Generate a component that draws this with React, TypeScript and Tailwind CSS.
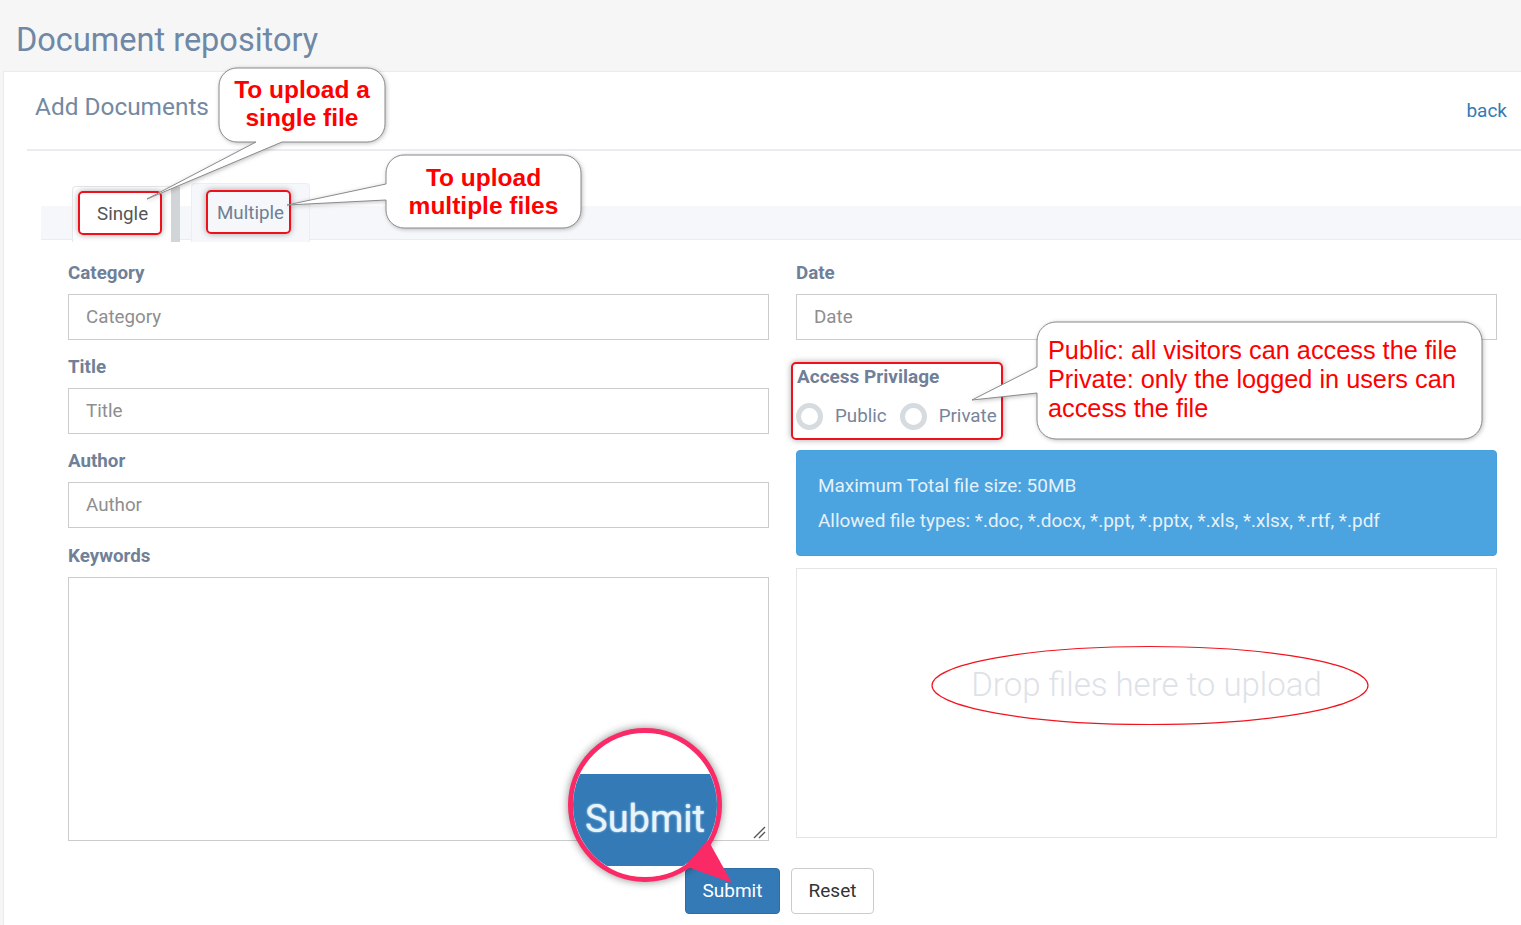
import React from "react";

const roboto = "font-['Roboto',sans-serif]";
const labelCls = "block h-[22px] mb-[10px] text-[18.75px] leading-[22px] font-bold text-[#6f8098]";
const inputCls =
  "block w-full h-[46px] border border-[#cccccc] bg-white px-[17px] text-[18.75px] text-[#555] placeholder:text-[#8e8e8e] outline-none";
const redBox = "absolute rounded-[5px] border-2 border-[#f0101c] shadow-[0_0_6px_rgba(0,0,0,0.35)]";

function Field({ label }: { label: string }) {
  return (
    <div className="mb-4">
      <label className={labelCls}>{label}</label>
      <input className={inputCls} placeholder={label} readOnly />
    </div>
  );
}

function Radio({ label }: { label: string }) {
  return (
    <div className="flex items-center gap-[12px]">
      <span className="block h-[27px] w-[27px] rounded-full border-[5px] border-[#d6dbdf] bg-white" />
      <span className="text-[18.75px] leading-[27px] text-[#76859b]">{label}</span>
    </div>
  );
}

// speech bubble: path is in page coords, svg sits at 0,0 of the page
function Bubbles() {
  return (
    <svg className="absolute left-0 top-0 drop-shadow-[1px_1px_2px_rgba(0,0,0,0.25)]" width="1521" height="925" fill="#fff" stroke="#8a8a8a" strokeWidth="1">
      <path d="M237 68H367a18 18 0 0 1 18 18V124a18 18 0 0 1-18 18H282L147 199L256 142H237a18 18 0 0 1-18-18V86a18 18 0 0 1 18-18Z" />
      <path d="M404 155H563a18 18 0 0 1 18 18V210a18 18 0 0 1-18 18H404a18 18 0 0 1-18-18V200L287 205L386 184V173a18 18 0 0 1 18-18Z" />
      <path d="M1056 322H1463a19 19 0 0 1 19 19V420a19 19 0 0 1-19 19H1056a19 19 0 0 1-19-19V393L972 400L1037 367V341a19 19 0 0 1 19-19Z" />
    </svg>
  );
}

function Magnifier() {
  return (
    <>
      <div className="absolute left-[568px] top-[728px] h-[154px] w-[154px] overflow-hidden rounded-full border-[5px] border-[#f92a66] bg-white shadow-[0_0_8px_rgba(0,0,0,0.45)]">
        <div className="mt-[41px] flex h-[92px] items-center justify-center bg-[#337ab7] pb-[2px] text-[38px] text-[#e8f4fb] [text-shadow:0_0_2px_#e8f4fb]">
          Submit
        </div>
      </div>
      <svg className="absolute left-0 top-0" width="1521" height="925">
        <path d="M708 840L732 883L685 866Z" fill="#f92a66" />
      </svg>
    </>
  );
}

export default function App() {
  return (
    <div className={`relative h-[925px] w-full overflow-hidden bg-[#f6f6f6] ${roboto}`}>
      <div className="h-[71px] pl-[16px] pt-[18px]">
        <h1 className="text-[32.5px] leading-[44px] font-normal text-[#6f88a6]">Document repository</h1>
      </div>

      <main className="ml-[3px] h-[854px] border-l border-t border-[#e9ebee] bg-white pl-[23px]">
        <div className="flex h-[79px] items-start justify-between border-b-2 border-[#e9edf1] pr-[14px]">
          <h2 className="mt-[18px] ml-[8px] text-[24.4px] leading-[34px] text-[#7389a3]">Add Documents</h2>
          <a className="mt-[26px] text-[19px] leading-[26px] text-[#337ab7]">back</a>
        </div>

        <div className="relative ml-[14px] mt-[31px] flex h-[60px] items-end pl-[31px]">
          <div className="absolute bottom-[2px] left-0 right-0 h-[34px] border-b border-[#e9edf1] bg-[#f5f7fa]" />
          <div className="relative flex h-[56px] w-[108px] items-center rounded-tl-[4px] border-l border-t border-[#e6e8eb] bg-white pl-[24px]">
            <span className="text-[18.75px] text-[#555]">Single</span>
            <span className="absolute bottom-0 right-0 top-0 w-[9px] bg-[#d2d5d8]" />
          </div>
          <div className="relative ml-[11px] flex h-[59px] w-[119px] items-center rounded-t-[4px] border border-b-0 border-[#eceef1] bg-[#f5f7fa] pl-[25px]">
            <span className="text-[18.75px] text-[#6f7f95]">Multiple</span>
          </div>
        </div>

        <div className="ml-[41px] mr-[24px] mt-[20px] grid grid-cols-[701px_701px] gap-x-[27px]">
          <div>
            <Field label="Category" />
            <Field label="Title" />
            <Field label="Author" />
            <label className={`${labelCls} !mb-[11px] !leading-[24px]`}>Keywords</label>
            <div className="relative">
              <textarea className="block h-[264px] w-full resize-none border border-[#cccccc] bg-white outline-none" readOnly />
              <svg className="absolute bottom-[2px] right-[2px]" width="14" height="14" stroke="#555" strokeWidth="1.3" fill="none">
                <path d="M1 13L12 2M6 13L12 7" />
              </svg>
            </div>
          </div>

          <div>
            <Field label="Date" />
            <div className="h-[94px] w-[206px] pt-[11px]">
              <div className="h-[20px] pl-[1px] text-[19px] leading-[20px] font-bold text-[#6f8098]">Access Privilage</div>
              <div className="mt-[16px] flex gap-[13px]">
                <Radio label="Public" />
                <Radio label="Private" />
              </div>
            </div>
            <div className="h-[106px] rounded-[4px] border border-[#46a0dc] bg-[#4ba3df] px-[21px] pt-[17px] text-[18.95px] leading-[35px] text-[#e6f1f9]">
              <p>Maximum Total file size: 50MB</p>
              <p>Allowed file types: *.doc, *.docx, *.ppt, *.pptx, *.xls, *.xlsx, *.rtf, *.pdf</p>
            </div>
            <div className="mt-[12px] flex h-[270px] items-center justify-center border border-[#e5e5e5] bg-white pb-[36px] text-[33px] font-light text-[#dde2e8]">
              Drop files here to upload
            </div>
          </div>
        </div>

        <div className="mt-[27px] flex gap-[11px] pl-[658px]">
          <button className="h-[46px] w-[95px] rounded-[4px] border border-[#2e6da4] bg-[#337ab7] text-[19px] text-white">Submit</button>
          <button className="h-[46px] w-[83px] rounded-[4px] border border-[#cccccc] bg-white text-[19px] text-[#333]">Reset</button>
        </div>
      </main>

      {/* annotations drawn over the screenshot */}
      <div className={`${redBox} left-[78px] top-[191px] h-[44px] w-[84px]`} />
      <div className={`${redBox} left-[206px] top-[190px] h-[44px] w-[85px]`} />
      <div className={`${redBox} left-[791px] top-[362px] h-[78px] w-[212px]`} />
      <Bubbles />

      <div className="absolute left-[219px] top-[76px] w-[166px] text-center font-['Liberation_Sans',sans-serif] text-[24.5px] leading-[28px] font-bold text-[#ff0000]">
        To upload a<br />single file
      </div>
      <div className="absolute left-[386px] top-[164px] w-[195px] text-center font-['Liberation_Sans',sans-serif] text-[24.5px] leading-[28px] font-bold text-[#ff0000]">
        To upload<br />multiple files
      </div>
      <div className="absolute left-[1048px] top-[336px] w-[430px] font-['Liberation_Sans',sans-serif] text-[25.3px] leading-[29px] text-[#ff0000]">
        Public: all visitors can access the file<br />Private: only the logged in users can<br />access the file
      </div>

      <svg className="absolute left-[930px] top-[645px]" width="440" height="81" fill="none">
        <ellipse cx="220" cy="40.5" rx="218" ry="39" stroke="#f0141e" strokeWidth="1.2" />
      </svg>

      <Magnifier />
    </div>
  );
}
